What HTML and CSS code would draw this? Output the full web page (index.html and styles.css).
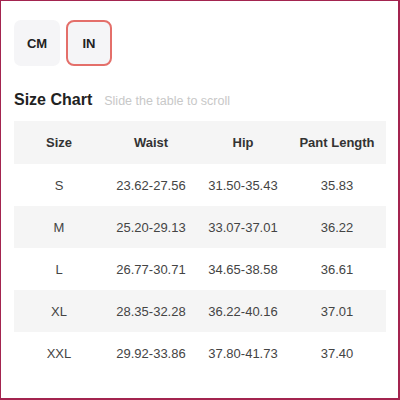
FILE: index.html
```html
<!DOCTYPE html>
<html>
<head>
<meta charset="utf-8">
<link rel="stylesheet" href="styles.css">
</head>
<body>
<div class="frame">
  <div class="units">
    <div class="unit">CM</div>
    <div class="unit active">IN</div>
  </div>
  <div class="title-row">
    <span class="title">Size Chart</span>
    <span class="hint">Slide the table to scroll</span>
  </div>
  <table class="chart">
    <colgroup>
      <col class="c1"><col class="c2"><col class="c3"><col class="c4">
    </colgroup>
    <thead>
      <tr><th>Size</th><th>Waist</th><th>Hip</th><th>Pant Length</th></tr>
    </thead>
    <tbody>
      <tr><td>S</td><td>23.62-27.56</td><td>31.50-35.43</td><td>35.83</td></tr>
      <tr class="alt"><td>M</td><td>25.20-29.13</td><td>33.07-37.01</td><td>36.22</td></tr>
      <tr><td>L</td><td>26.77-30.71</td><td>34.65-38.58</td><td>36.61</td></tr>
      <tr class="alt"><td>XL</td><td>28.35-32.28</td><td>36.22-40.16</td><td>37.01</td></tr>
      <tr><td>XXL</td><td>29.92-33.86</td><td>37.80-41.73</td><td>37.40</td></tr>
    </tbody>
  </table>
</div>
</body>
</html>
```
FILE: styles.css
```css
html, body {
  margin: 0;
  padding: 0;
  background: #fff;
}
body {
  font-family: "Liberation Sans", Arial, sans-serif;
  color: #333;
}
.frame {
  box-sizing: border-box;
  width: 400px;
  height: 400px;
  border-style: solid;
  border-color: #a3244f;
  border-width: 1px 2px 2px 1px;
  padding: 19px 12px 0 13px;
}
.units {
  display: flex;
  gap: 6px;
}
.unit {
  box-sizing: border-box;
  width: 46px;
  height: 46px;
  border-radius: 7px;
  background: #f5f5f7;
  display: flex;
  align-items: center;
  justify-content: center;
  font-size: 13px;
  font-weight: bold;
  color: #222;
}
.unit.active {
  border: 2px solid #e46f6a;
  border-radius: 8px;
}
.title-row {
  display: flex;
  align-items: baseline;
  gap: 12px;
  margin-top: 24px;
  height: 20px;
}
.title {
  font-size: 16px;
  font-weight: bold;
  color: #222;
  line-height: 20px;
}
.hint {
  font-size: 12.5px;
  color: #c8c8c8;
}
.chart {
  margin-top: 11px;
  width: 372px;
  border-collapse: collapse;
  table-layout: fixed;
  font-size: 13px;
}
.c1 { width: 90px; }
.c2 { width: 94px; }
.c3 { width: 90px; }
.c4 { width: 98px; }
.chart th, .chart td {
  text-align: center;
  padding: 0;
}
.chart thead tr {
  background: #f5f5f5;
  height: 43px;
}
.chart th {
  font-weight: bold;
  color: #333;
}
.chart tbody tr {
  height: 42px;
}
.chart td {
  color: #444;
}
.chart tr.alt {
  background: #f5f5f5;
}
```
